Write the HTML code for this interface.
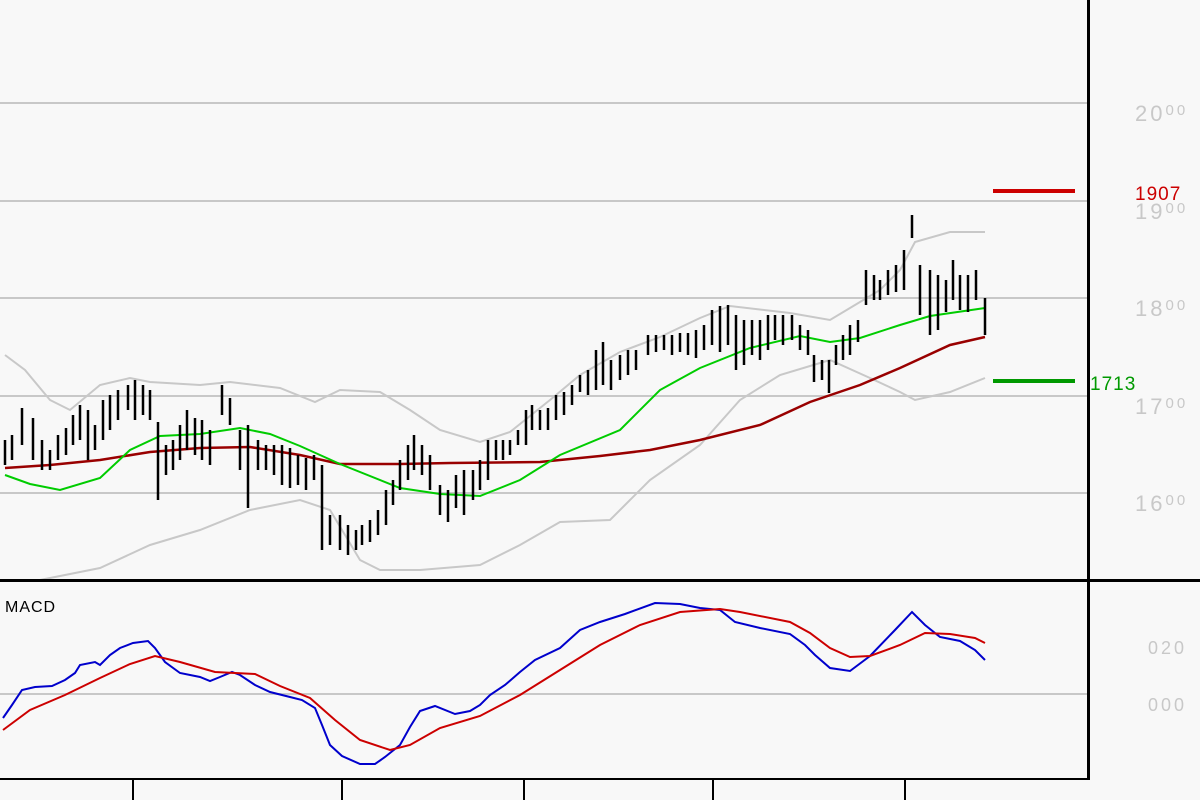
<!DOCTYPE html>
<html><head><meta charset="utf-8"><style>
html,body{margin:0;padding:0;background:#f8f8f8;}
svg{display:block}
text{font-family:"Liberation Sans",sans-serif;}
</style></head><body>
<svg width="1200" height="800" viewBox="0 0 1200 800" xmlns="http://www.w3.org/2000/svg">
<rect width="1200" height="800" fill="#f8f8f8"/>
<g stroke="#c8c8c8" stroke-width="2">
<line x1="0" y1="103" x2="1088" y2="103"/>
<line x1="0" y1="201" x2="1088" y2="201"/>
<line x1="0" y1="298" x2="1088" y2="298"/>
<line x1="0" y1="396" x2="1088" y2="396"/>
<line x1="0" y1="493" x2="1088" y2="493"/>
<line x1="0" y1="694" x2="1088" y2="694"/>
</g>
<g fill="none" stroke="#c8c8c8" stroke-width="2">
<polyline points="5,355 25,370 50,400 70,410 100,385 130,378 150,382 200,385 230,382 280,388 315,402 340,390 380,392 410,410 440,430 480,442 510,432 550,400 580,375 620,352 660,337 700,318 730,306 790,313 830,320 860,302 880,290 900,270 915,242 950,232 985,232"/>
<polyline points="40,580 100,568 150,545 200,530 250,510 300,500 330,510 360,560 380,570 420,570 480,565 520,545 560,522 610,520 650,480 700,445 740,400 780,375 830,360 870,378 900,392 915,400 950,392 985,378"/>
</g>
<polyline fill="none" stroke="#990000" stroke-width="2.5" points="5,468 50,465 100,460 150,452 200,448 250,447 300,455 340,464 400,464 450,463 540,462 600,456 650,450 700,440 760,425 810,402 860,385 900,368 950,345 985,337"/>
<polyline fill="none" stroke="#00cc00" stroke-width="2" points="5,475 30,484 60,490 100,478 130,450 160,436 200,434 240,428 270,434 300,446 340,464 400,488 440,494 480,496 520,480 560,455 620,430 660,390 700,368 750,348 800,336 830,342 860,338 900,325 930,316 985,308"/>
<path fill="none" stroke="#000" stroke-width="2.5" d="M5 440V465M12 435V460M22 408V445M33 418V460M42 440V470M50 450V470M58 435V460M66 428V455M73 415V445M80 405V440M88 410V460M95 425V450M103 400V440M110 395V430M118 390V420M128 385V410M135 380V420M143 385V415M150 390V420M158 422V500M166 445V475M173 440V470M180 425V460M187 410V450M195 418V455M202 420V460M210 430V465M222 385V415M230 398V425M240 430V470M248 425V508M258 440V470M266 445V470M274 445V475M282 445V485M290 448V488M298 455V485M306 458V490M314 455V480M322 465V550M330 515V545M340 515V550M348 525V555M356 530V550M362 525V545M370 520V542M378 510V535M386 490V525M393 480V505M400 460V490M408 445V480M414 435V470M422 445V475M430 455V490M440 485V515M448 490V522M456 475V508M464 470V515M473 470V500M480 460V490M488 440V480M496 440V460M503 440V460M510 440V455M518 430V445M526 410V445M532 405V430M540 410V430M548 408V430M556 395V420M564 392V415M572 385V405M580 375V392M588 370V395M596 350V390M603 342V385M611 360V390M620 355V380M628 350V375M636 350V370M648 335V355M656 335V352M664 335V350M672 335V355M680 333V352M688 333V355M696 330V358M704 325V350M712 310V345M720 306V352M728 305V345M736 315V370M744 320V365M752 320V355M760 320V360M768 315V350M775 315V340M783 315V345M792 315V340M800 325V350M808 330V355M814 355V382M822 360V380M829 360V393M836 345V365M843 335V360M850 325V355M858 320V342M866 270V305M874 275V300M880 280V300M888 270V295M896 265V292M904 250V290M912 215V238M920 265V315M930 270V335M938 275V330M946 280V312M953 260V300M960 275V310M968 275V312M976 270V300M985 298V335"/>
<line x1="993" y1="191" x2="1075" y2="191" stroke="#cc0000" stroke-width="4"/>
<line x1="993" y1="381" x2="1075" y2="381" stroke="#009900" stroke-width="4"/>
<polyline fill="none" stroke="#0000cc" stroke-width="2" points="3,718 12,705 22,690 35,687 52,686 65,680 75,673 80,665 95,662 100,665 110,655 120,648 133,643 148,641 155,648 165,662 180,673 200,677 210,681 220,677 232,672 240,675 255,685 270,692 290,697 302,700 315,708 322,725 330,745 342,756 360,764 375,764 385,757 400,745 410,727 420,711 435,706 455,714 470,711 480,705 490,695 505,685 520,672 535,660 560,648 580,630 600,622 625,614 655,603 680,604 700,608 720,610 735,622 760,628 790,634 805,645 815,655 830,668 850,671 870,656 895,630 912,612 925,625 940,637 960,641 975,650 985,660"/>
<polyline fill="none" stroke="#cc0000" stroke-width="2" points="3,730 30,710 65,695 100,678 130,664 155,656 180,662 215,672 255,674 280,686 310,698 335,720 360,740 390,750 410,745 440,728 480,716 520,695 560,670 600,645 640,625 680,612 720,609 740,612 790,622 810,633 830,648 850,657 870,656 900,645 925,633 950,634 975,638 985,643"/>
<rect x="1087" y="0" width="3" height="780" fill="#000"/>
<rect x="0" y="579" width="1200" height="3" fill="#000"/>
<rect x="0" y="778" width="1090" height="2" fill="#000"/>
<g stroke="#000" stroke-width="2">
<line x1="133" y1="779" x2="133" y2="800"/><line x1="342" y1="779" x2="342" y2="800"/>
<line x1="524" y1="779" x2="524" y2="800"/><line x1="713" y1="779" x2="713" y2="800"/>
<line x1="905" y1="779" x2="905" y2="800"/>
</g>
<text x="5" y="612" font-size="16" fill="#000" letter-spacing="1">MACD</text>
<g fill="#c8c8c8" font-size="22" letter-spacing="3">
<text x="1135" y="121">20<tspan font-size="15" dy="-6">00</tspan></text>
<text x="1135" y="219">19<tspan font-size="15" dy="-6">00</tspan></text>
<text x="1135" y="316">18<tspan font-size="15" dy="-6">00</tspan></text>
<text x="1135" y="414">17<tspan font-size="15" dy="-6">00</tspan></text>
<text x="1135" y="511">16<tspan font-size="15" dy="-6">00</tspan></text>
<text x="1148" y="654" font-size="18">020</text>
<text x="1148" y="711" font-size="18">000</text>
</g>
<text x="1135" y="200" font-size="19" fill="#cc0000" letter-spacing="1">1907</text>
<text x="1090" y="390" font-size="19" fill="#009900" letter-spacing="1">1713</text>
</svg>
</body></html>
